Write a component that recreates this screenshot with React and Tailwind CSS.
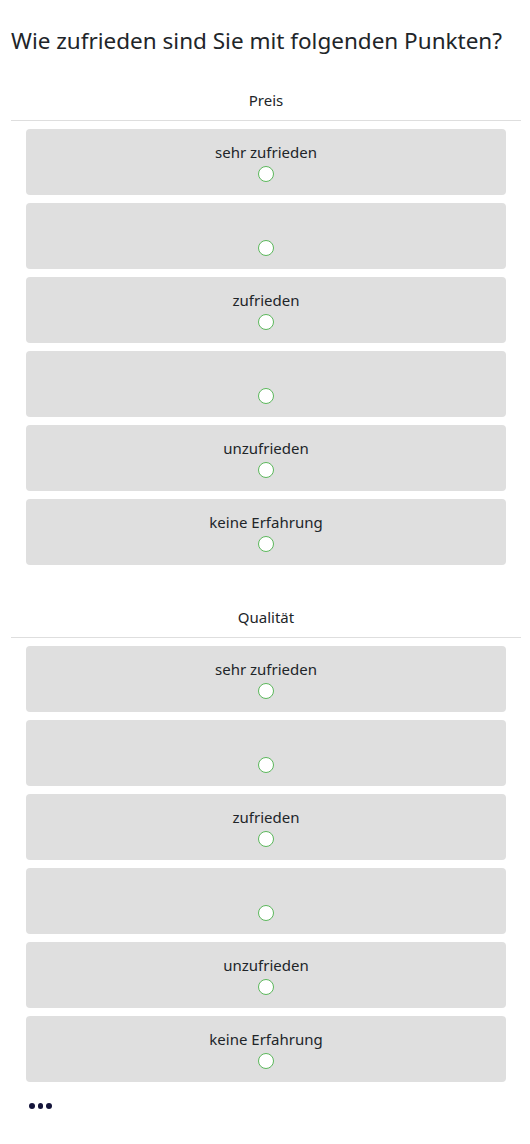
const options = ["sehr zufrieden", "", "zufrieden", "", "unzufrieden", "keine Erfahrung"];

function Option({ label }) {
  return (
    <div className="flex h-[66px] flex-col items-center rounded-[4px] bg-[#dfdfdf] pt-[12px]">
      <div className="h-[22px] text-[15px] leading-[22px] text-[#212529]">{label || "\u00a0"}</div>
      <div className="mt-[3px] h-[16px] w-[16px] rounded-full border border-[#5cb85c] bg-white" />
    </div>
  );
}

function Section({ title, className = "" }) {
  return (
    <div className={className}>
      <div className="border-b border-[#dedede] pb-[9px] text-center text-[15px] leading-[22px] text-[#212529]">{title}</div>
      <div className="flex flex-col gap-[8px] px-[15px] pt-[8px]">
        {options.map((o, i) => <Option key={i} label={o} />)}
      </div>
    </div>
  );
}

export default function App() {
  return (
    <div className="min-h-screen bg-white pl-[11px] pr-[9px] pt-[24px] pb-[20px]" style={{ fontFamily: '"Noto Sans", "Open Sans", sans-serif' }}>
      <h1 className="text-[22.5px] leading-[34px] text-[#212529]">Wie zufrieden sind Sie mit folgenden Punkten?</h1>
      <Section title="Preis" className="mt-[31px]" />
      <Section title="Qualität" className="mt-[41px]" />
      <div className="mt-[21px] flex items-center gap-[3px] pl-[18px]">
        <span className="h-[5.5px] w-[5.5px] rounded-full bg-[#14143a]" />
        <span className="h-[5.5px] w-[5.5px] rounded-full bg-[#14143a]" />
        <span className="h-[5.5px] w-[5.5px] rounded-full bg-[#14143a]" />
      </div>
    </div>
  );
}
